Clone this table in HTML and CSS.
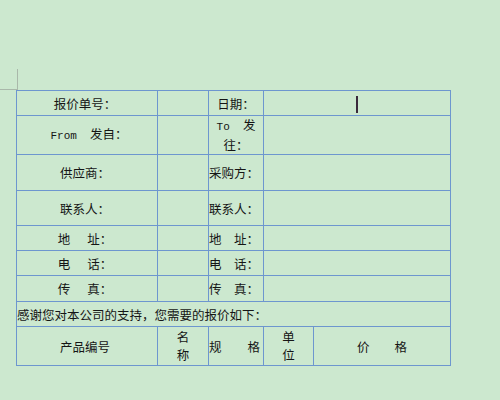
FILE: index.html
```html
<!DOCTYPE html>
<html lang="zh-CN">
<head>
<meta charset="utf-8">
<title>报价单</title>
<link rel="stylesheet" href="styles.css">
</head>
<body>
<div class="crop"></div>
<table class="quote">
  <colgroup>
    <col class="c1"><col class="c2"><col class="c3"><col class="c4"><col class="c5">
  </colgroup>
  <tr class="r1">
    <td class="lbl">报价单号：</td>
    <td></td>
    <td class="mid">日期：</td>
    <td colspan="2" class="mid"><span class="caret"></span></td>
  </tr>
  <tr class="r2">
    <td class="lbl from"><span class="lat">From&nbsp;&nbsp;</span>发自：</td>
    <td></td>
    <td class="mid tall"><span class="lat">To&nbsp;&nbsp;</span>发<br>往：</td>
    <td colspan="2"></td>
  </tr>
  <tr class="r3">
    <td class="lbl">供应商：</td>
    <td></td>
    <td class="left">采购方：</td>
    <td colspan="2"></td>
  </tr>
  <tr class="r4">
    <td class="lbl">联系人：</td>
    <td></td>
    <td class="left">联系人：</td>
    <td colspan="2"></td>
  </tr>
  <tr class="r5">
    <td class="lbl">地<span class="gap"></span>址：</td>
    <td></td>
    <td class="left">地　址：</td>
    <td colspan="2"></td>
  </tr>
  <tr class="r6">
    <td class="lbl">电<span class="gap"></span>话：</td>
    <td></td>
    <td class="left">电　话：</td>
    <td colspan="2"></td>
  </tr>
  <tr class="r7">
    <td class="lbl">传<span class="gap"></span>真：</td>
    <td></td>
    <td class="left">传　真：</td>
    <td colspan="2"></td>
  </tr>
  <tr class="r8">
    <td colspan="5" class="left">感谢您对本公司的支持，您需要的报价如下：</td>
  </tr>
  <tr class="r9">
    <td class="lbl">产品编号</td>
    <td class="mid tall">名<br>称</td>
    <td class="spread"><div class="ends"><span>规</span><span>格</span></div></td>
    <td class="mid tall">单<br>位</td>
    <td class="mid">价　　格</td>
  </tr>
</table>
</body>
</html>
```
FILE: styles.css
```css
html, body {
  margin: 0;
  padding: 0;
  background: #cce8cf;
}

body {
  font-family: "Noto Sans CJK SC", "Noto Sans", sans-serif;
  font-size: 12.5px;
  line-height: 17px;
  color: #151515;
}

.crop {
  width: 17px;
  height: 20px;
  margin-top: 69px;
  border-right: 1px solid #a9b8aa;
  border-bottom: 1px solid #a9b8aa;
}

.quote {
  margin-left: 16px;
  border-collapse: separate;
  border-spacing: 1px;
  background: #6d96cf;
  table-layout: fixed;
  width: 435px;
}

.c1 { width: 140px; }
.c2 { width: 50px; }
.c3 { width: 54px; }
.c4 { width: 49px; }
.c5 { width: 136px; }

.quote td {
  background: #cce8cf;
  padding: 0;
  vertical-align: middle;
  white-space: nowrap;
  overflow: hidden;
}

.r1 td { height: 24px; }
.r2 td { height: 38px; }
.r3 td { height: 35px; }
.r4 td { height: 34px; }
.r5 td { height: 24px; }
.r6 td { height: 24px; }
.r7 td { height: 25px; }
.r8 td { height: 24px; }
.r9 td { height: 38px; }

.lbl {
  text-align: center;
  padding-right: 4px !important;
}

.lbl.from {
  padding-right: 0 !important;
  padding-left: 4px !important;
}

.mid {
  text-align: center;
}

.left {
  text-align: left;
}

.tall {
  line-height: 18px;
}

.lat {
  font-family: "Liberation Mono", monospace;
  font-size: 11px;
}

.gap {
  display: inline-block;
  width: 17px;
}

.caret {
  display: inline-block;
  width: 2px;
  height: 17px;
  background: #3a2a3c;
  vertical-align: middle;
}

.spread {
  padding-right: 3px !important;
}

.ends {
  display: flex;
  justify-content: space-between;
}
```
